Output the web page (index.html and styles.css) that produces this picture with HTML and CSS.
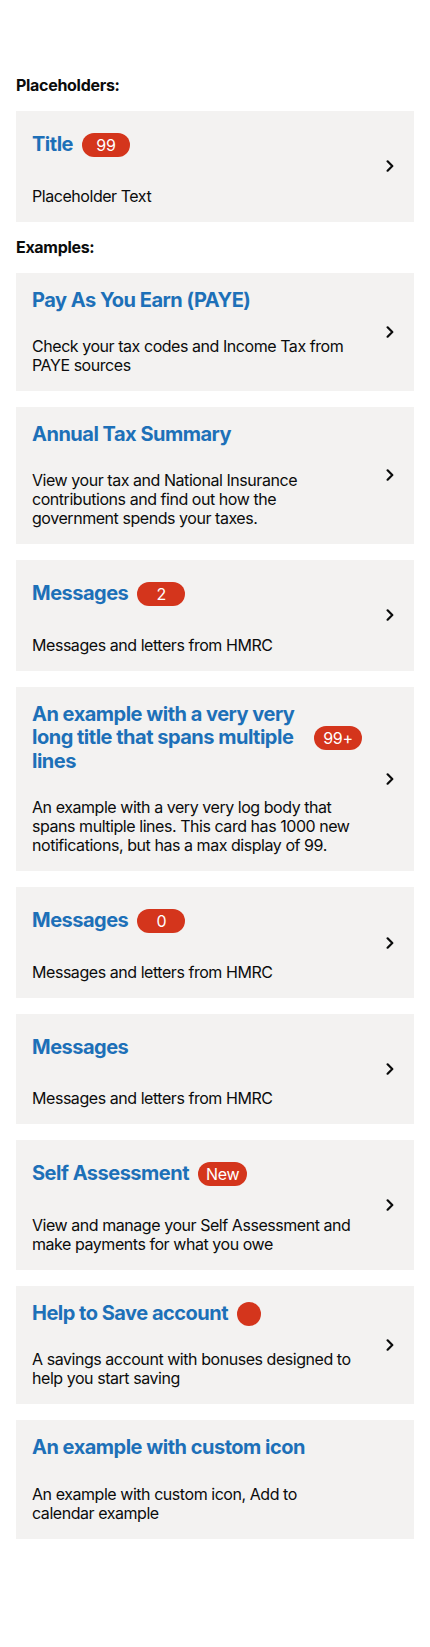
FILE: index.html
```html
<!DOCTYPE html>
<html lang="en">
<head>
<meta charset="utf-8">
<title>Cards</title>
<link rel="stylesheet" href="styles.css">
</head>
<body>
<main class="page">
  <h2 class="section-heading">Placeholders:</h2>
  <div class="card">
    <div class="card-content">
      <div class="title-row tall">
        <span class="card-title">Title</span>
        <span class="badge">99</span>
      </div>
      <p class="card-body">Placeholder Text</p>
    </div>
    <span class="chevron"><svg width="8" height="12" viewBox="0 0 8 12"><path d="M1.6 1.3 L6.3 6 L1.6 10.7" fill="none" stroke="#0b0c0c" stroke-width="2.2" stroke-linecap="round" stroke-linejoin="round"/></svg></span>
  </div>

  <h2 class="section-heading">Examples:</h2>
  <div class="card">
    <div class="card-content">
      <div class="title-row">
        <span class="card-title">Pay As You Earn (PAYE)</span>
      </div>
      <p class="card-body">Check your tax codes and Income Tax from PAYE sources</p>
    </div>
    <span class="chevron"><svg width="8" height="12" viewBox="0 0 8 12"><path d="M1.6 1.3 L6.3 6 L1.6 10.7" fill="none" stroke="#0b0c0c" stroke-width="2.2" stroke-linecap="round" stroke-linejoin="round"/></svg></span>
  </div>

  <div class="card">
    <div class="card-content">
      <div class="title-row">
        <span class="card-title">Annual Tax Summary</span>
      </div>
      <p class="card-body">View your tax and National Insurance contributions and find out how the government spends your taxes.</p>
    </div>
    <span class="chevron"><svg width="8" height="12" viewBox="0 0 8 12"><path d="M1.6 1.3 L6.3 6 L1.6 10.7" fill="none" stroke="#0b0c0c" stroke-width="2.2" stroke-linecap="round" stroke-linejoin="round"/></svg></span>
  </div>

  <div class="card">
    <div class="card-content">
      <div class="title-row tall">
        <span class="card-title">Messages</span>
        <span class="badge">2</span>
      </div>
      <p class="card-body">Messages and letters from HMRC</p>
    </div>
    <span class="chevron"><svg width="8" height="12" viewBox="0 0 8 12"><path d="M1.6 1.3 L6.3 6 L1.6 10.7" fill="none" stroke="#0b0c0c" stroke-width="2.2" stroke-linecap="round" stroke-linejoin="round"/></svg></span>
  </div>

  <div class="card">
    <div class="card-content">
      <div class="title-row">
        <span class="card-title">An example with a very very long title that spans multiple lines</span>
        <span class="badge">99+</span>
      </div>
      <p class="card-body">An example with a very very log body that spans multiple lines. This card has 1000 new notifications, but has a max display of 99.</p>
    </div>
    <span class="chevron"><svg width="8" height="12" viewBox="0 0 8 12"><path d="M1.6 1.3 L6.3 6 L1.6 10.7" fill="none" stroke="#0b0c0c" stroke-width="2.2" stroke-linecap="round" stroke-linejoin="round"/></svg></span>
  </div>

  <div class="card">
    <div class="card-content">
      <div class="title-row tall">
        <span class="card-title">Messages</span>
        <span class="badge">0</span>
      </div>
      <p class="card-body">Messages and letters from HMRC</p>
    </div>
    <span class="chevron"><svg width="8" height="12" viewBox="0 0 8 12"><path d="M1.6 1.3 L6.3 6 L1.6 10.7" fill="none" stroke="#0b0c0c" stroke-width="2.2" stroke-linecap="round" stroke-linejoin="round"/></svg></span>
  </div>

  <div class="card">
    <div class="card-content">
      <div class="title-row tall">
        <span class="card-title">Messages</span>
      </div>
      <p class="card-body">Messages and letters from HMRC</p>
    </div>
    <span class="chevron"><svg width="8" height="12" viewBox="0 0 8 12"><path d="M1.6 1.3 L6.3 6 L1.6 10.7" fill="none" stroke="#0b0c0c" stroke-width="2.2" stroke-linecap="round" stroke-linejoin="round"/></svg></span>
  </div>

  <div class="card">
    <div class="card-content">
      <div class="title-row tall">
        <span class="card-title">Self Assessment</span>
        <span class="badge">New</span>
      </div>
      <p class="card-body">View and manage your Self Assessment and make payments for what you owe</p>
    </div>
    <span class="chevron"><svg width="8" height="12" viewBox="0 0 8 12"><path d="M1.6 1.3 L6.3 6 L1.6 10.7" fill="none" stroke="#0b0c0c" stroke-width="2.2" stroke-linecap="round" stroke-linejoin="round"/></svg></span>
  </div>

  <div class="card">
    <div class="card-content">
      <div class="title-row">
        <span class="card-title">Help to Save account</span>
        <span class="dot"></span>
      </div>
      <p class="card-body">A savings account with bonuses designed to help you start saving</p>
    </div>
    <span class="chevron"><svg width="8" height="12" viewBox="0 0 8 12"><path d="M1.6 1.3 L6.3 6 L1.6 10.7" fill="none" stroke="#0b0c0c" stroke-width="2.2" stroke-linecap="round" stroke-linejoin="round"/></svg></span>
  </div>

  <div class="card">
    <div class="card-content">
      <div class="title-row">
        <span class="card-title">An example with custom icon</span>
      </div>
      <p class="card-body">An example with custom icon, Add to calendar example</p>
    </div>
    <span class="chevron"></span>
  </div>
</main>
</body>
</html>
```

FILE: styles.css
```css
* {
  box-sizing: border-box;
}

html, body {
  margin: 0;
  padding: 0;
  background: #ffffff;
}

body {
  font-family: Inter, "Noto Sans", "Liberation Sans", sans-serif;
  color: #0b0c0c;
}

.page {
  padding: 76px 16px 40px;
  display: flex;
  flex-direction: column;
  gap: 16px;
}

.section-heading {
  margin: 0;
  font-size: 16px;
  line-height: 19px;
  font-weight: 700;
  letter-spacing: -0.3px;
  color: #0b0c0c;
}

.card {
  background: #f3f2f1;
  padding: 16px;
  display: flex;
  align-items: center;
  gap: 20px;
}

.card-content {
  flex: 1 1 auto;
  min-width: 0;
  display: flex;
  flex-direction: column;
  gap: 24.5px;
}

.title-row {
  display: flex;
  align-items: center;
  gap: 9px;
}

.title-row.tall {
  min-height: 35px;
}

.card-title {
  font-size: 20px;
  line-height: 23.8px;
  font-weight: 700;
  letter-spacing: -0.5px;
  color: #1d70b8;
  flex: 0 1 auto;
  min-width: 0;
}

.badge {
  flex: 0 0 auto;
  min-width: 48px;
  height: 24px;
  border-radius: 12px;
  background: #d4351c;
  color: #ffffff;
  font-size: 16px;
  line-height: 24px;
  letter-spacing: -0.3px;
  text-align: center;
  padding: 0 8px;
}

.dot {
  flex: 0 0 auto;
  width: 24px;
  height: 24px;
  border-radius: 50%;
  background: #d4351c;
}

.card-body {
  margin: 0;
  font-size: 16px;
  line-height: 19px;
  letter-spacing: -0.45px;
  color: #0b0c0c;
}

.chevron {
  flex: 0 0 16px;
  width: 16px;
  height: 16px;
  display: flex;
  align-items: center;
  justify-content: center;
}
```
